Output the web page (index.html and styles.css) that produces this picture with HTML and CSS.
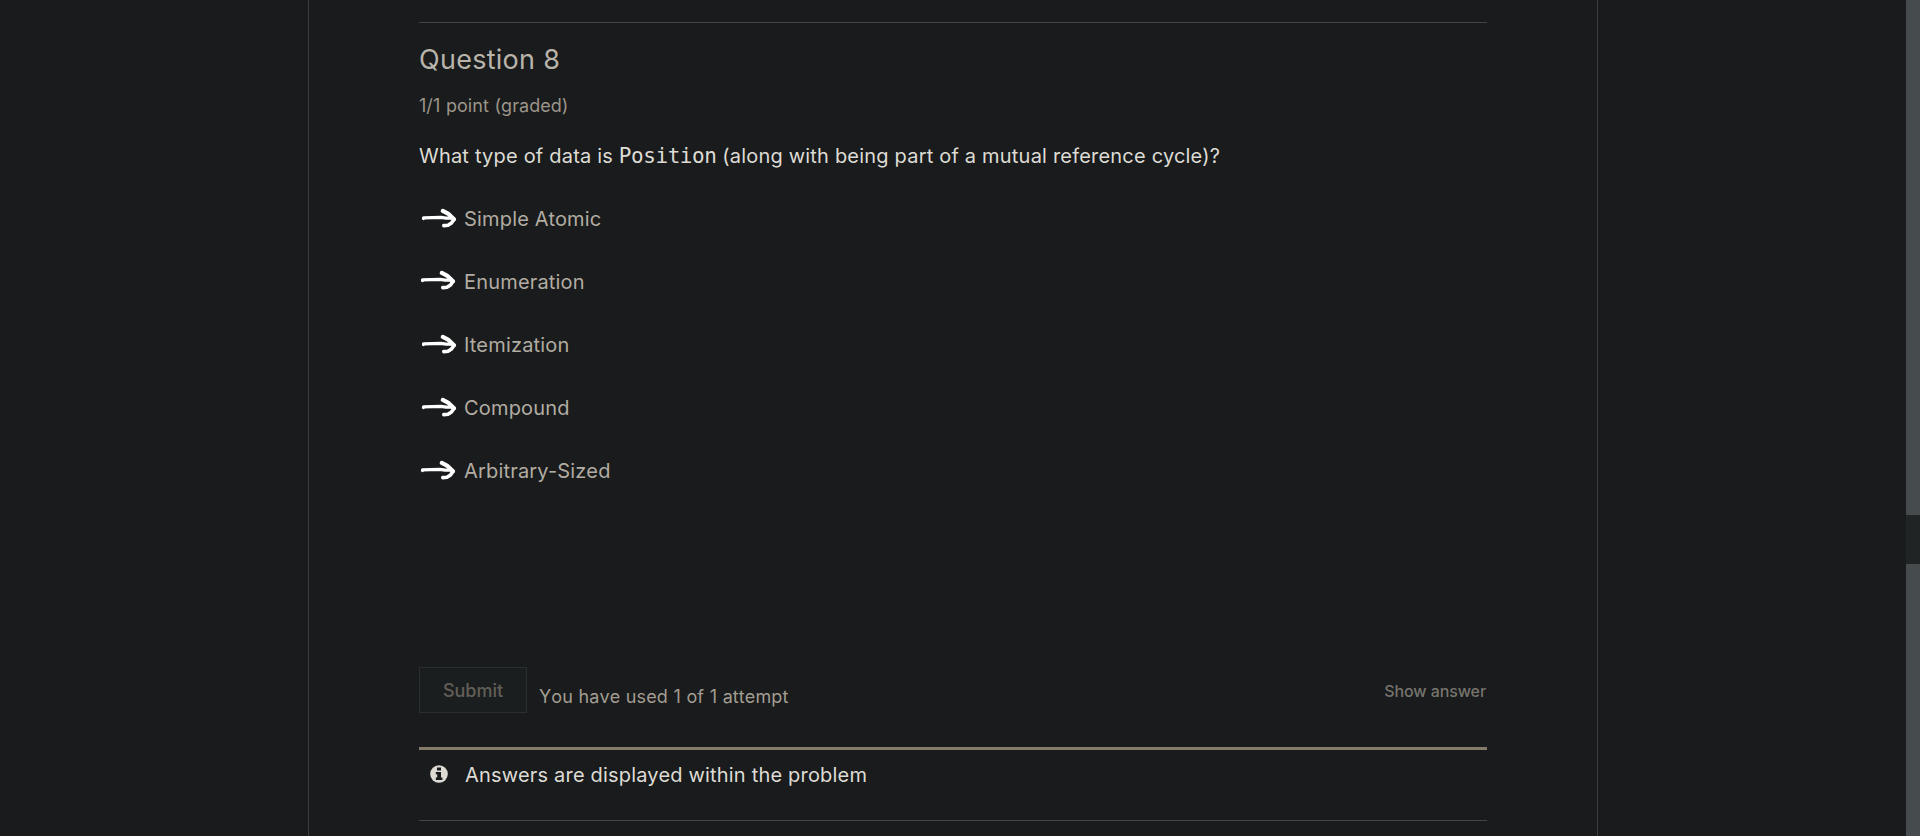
FILE: index.html
```html
<!DOCTYPE html>
<html lang="en">
<head>
<meta charset="utf-8">
<title>Question 8</title>
<link rel="stylesheet" href="styles.css">
</head>
<body>
<svg class="defs" aria-hidden="true">
  <symbol id="arrow" viewBox="0 0 38 22">
    <path d="M4.5 11.6 V10.8 L22 10.4 L27 11.2 H33" stroke-width="3.2"/>
    <path d="M23.8 3.9 L29 6.6 L35 12.3" stroke-width="4.2"/>
    <path d="M35 12.3 L32.5 16 L29 18.2 L24.8 18.6" stroke-width="3.6"/>
  </symbol>
</svg>
<div class="page">
  <main class="panel">
    <section class="problem">
      <h3 class="title">Question 8</h3>
      <div class="progress">1/1 point (graded)</div>
      <p class="prompt">What type of data is <code>Position</code> (along with being part of a mutual reference cycle)?</p>
      <ul class="choices">
        <li><svg class="arrow"><use href="#arrow"/></svg><span>Simple Atomic</span></li>
        <li><svg class="arrow shifted"><use href="#arrow"/></svg><span>Enumeration</span></li>
        <li><svg class="arrow"><use href="#arrow"/></svg><span>Itemization</span></li>
        <li><svg class="arrow"><use href="#arrow"/></svg><span>Compound</span></li>
        <li><svg class="arrow shifted-x"><use href="#arrow"/></svg><span>Arbitrary-Sized</span></li>
      </ul>
      <div class="action">
        <button class="submit" disabled>Submit</button>
        <div class="attempts">You have used 1 of 1 attempt</div>
        <a class="show-answer">Show answer</a>
      </div>
      <div class="notification">
        <svg class="info" viewBox="0 0 18 18"><circle cx="9" cy="9" r="8.8"/><path d="M7 2.6h4v3H7zM5.8 7H11v5.6h1.4v2.3H5.8v-2.3h1.4V9.2H5.8z"/></svg>
        <span>Answers are displayed within the problem</span>
      </div>
    </section>
  </main>
  <div class="scrollbar"><div class="thumb"></div></div>
</div>
</body>
</html>
```
FILE: styles.css
```css
* { box-sizing: border-box; }
body {
  margin: 0;
  background: #191b1c;
  font-family: Inter, "Liberation Sans", sans-serif;
  font-size: 20px;
  letter-spacing: 0.19px;
  color: #dedbd5;
}
.defs { position: absolute; width: 0; height: 0; }
.page {
  display: flex;
  justify-content: space-between;
  height: 836px;
  overflow: hidden;
  padding-left: 308px;
}
.panel {
  width: 1290px;
  padding: 22px 110px 0;
  border-left: 1px solid #3b3d3e;
  border-right: 1px solid #3b3d3e;
}
.problem {
  height: 799px;
  border-top: 1px solid #424445;
  border-bottom: 1px solid #424445;
}
.title {
  margin: 17px 0 0;
  font-size: 27px;
  font-weight: 370;
  letter-spacing: 0.27px;
  line-height: 40px;
  color: #b9b4ab;
}
.progress {
  margin-top: 11px;
  font-size: 18px;
  letter-spacing: 0.05px;
  word-spacing: 0.5px;
  font-kerning: none;
  line-height: 30px;
  color: #9c958a;
}
.prompt {
  margin: 20px 0 0;
  letter-spacing: 0.2px;
  line-height: 30px;
  white-space: nowrap;
}
.prompt code { font-family: "DejaVu Sans Mono", monospace; font-size: 21px; letter-spacing: -0.45px; line-height: 1; }
.choices { list-style: none; margin: 16px 0 0; padding: 0; }
.choices li {
  display: flex;
  align-items: center;
  height: 63px;
  line-height: 30px;
  letter-spacing: 0.18px;
  color: #b2aca2;
}
.arrow {
  width: 38px;
  height: 22px;
  margin-right: 7px;
  margin-bottom: 1px;
  fill: none;
  stroke: #fff;
  stroke-linecap: round;
  stroke-linejoin: round;
}
.shifted { margin-left: -1px; margin-right: 8px; margin-bottom: 3px; }
.shifted-x { margin-left: -1px; margin-right: 8px; }
.action { display: flex; height: 46px; margin-top: 165px; }
.submit {
  width: 108px;
  height: 46px;
  padding: 0;
  border: 1px solid #292e30;
  background: #1a1e1f;
  font: 550 18px/46px Inter, sans-serif;
  color: #625e57;
}
.attempts { margin: 15px 0 0 12px; font-size: 18px; letter-spacing: 0.1px; word-spacing: 0.4px; font-kerning: none; line-height: 30px; color: #a39d92; }
.show-answer { margin: 9px 1px 0 auto; font-size: 16px; font-weight: 500; letter-spacing: -0.1px; line-height: 30px; color: #77746e; }
.notification {
  display: flex;
  align-items: flex-start;
  margin-top: 34px;
  border-top: 3px solid #857b6b;
  padding: 10px 0 0 11px;
  line-height: 30px;
}
.info { width: 18px; height: 18px; margin: 5px 17px 0 0; fill: #dedbd5; }
.info path { fill: #191b1c; }
.scrollbar { width: 14px; background: #464b4d; padding-top: 515px; }
.thumb { height: 49px; background: #202425; }
```
